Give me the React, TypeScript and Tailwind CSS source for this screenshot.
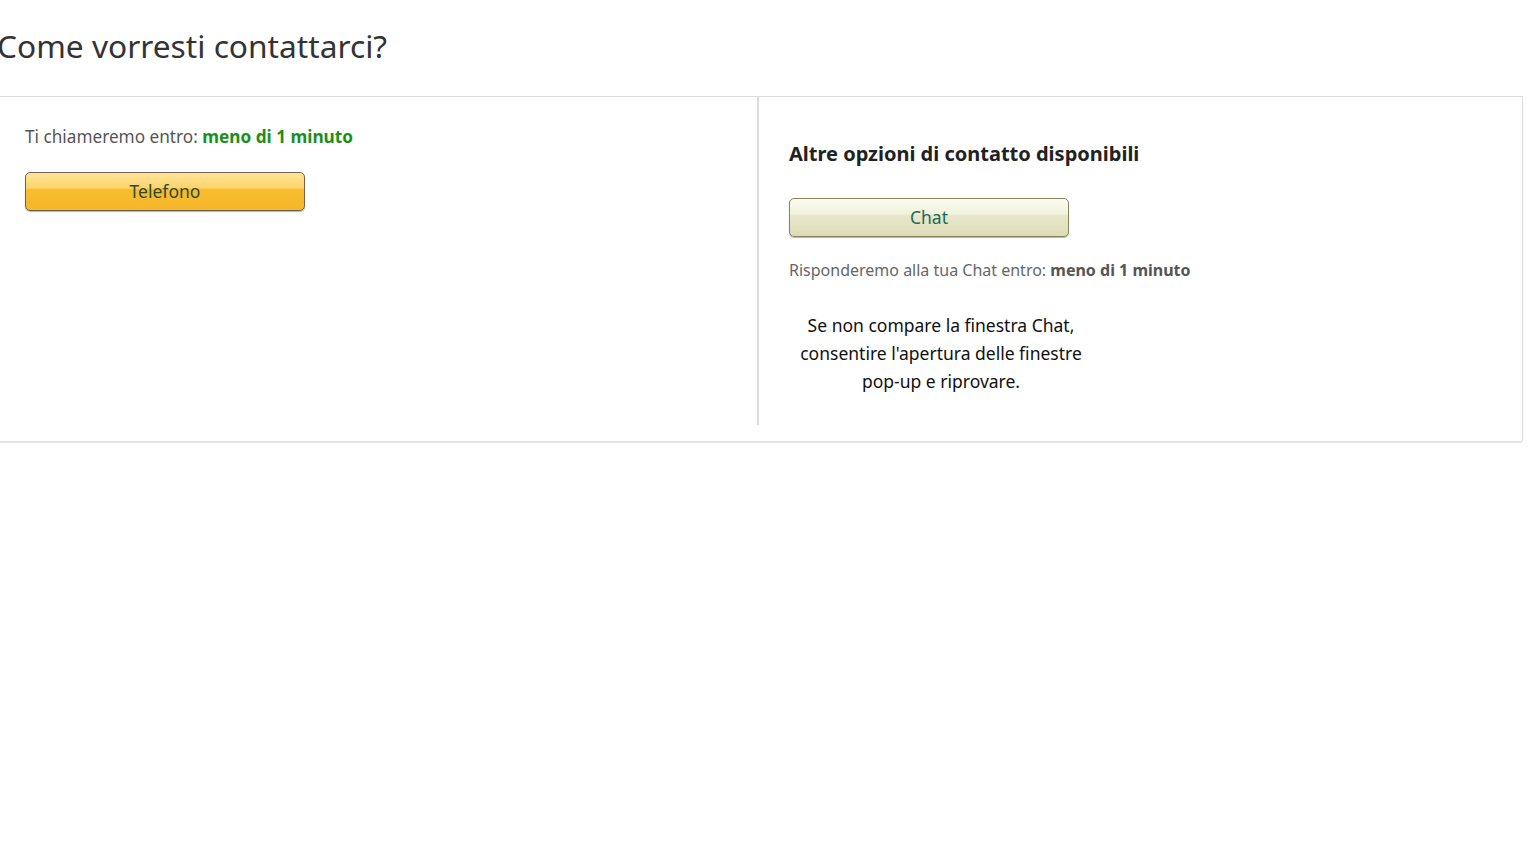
const font = { fontFamily: '"Noto Sans", "Open Sans", sans-serif' };

export default function App() {
  return (
    <div className="min-h-[851px] bg-white text-[#333]" style={font}>
      <h1 className="-ml-[3px] pt-[27px] h-[96px] text-[31.7px] leading-[38px] font-normal text-[#333]">
        Come vorresti contattarci?
      </h1>
      <div className="w-[1523px] border-t border-[#ddd] border-r border-b-2 border-b-[#e3e3e3] rounded-br-[4px] pb-4 flex">
        <div className="w-[759px] h-[328px] border-r-2 border-[#ddd] pl-[25px] pt-[29px]">
          <p className="text-[17.2px] leading-[22px] text-[#555]">
            Ti chiameremo entro: <span className="font-bold text-[#1a8f1a]">meno di 1 minuto</span>
          </p>
          <button className="mt-[24px] w-[280px] h-[39px] rounded-[5px] border border-[#6e6450] bg-[linear-gradient(#ffe39a_0%,#fdd46a_40%,#f8bd2e_45%,#f6b62a_100%)] text-[17.5px] text-[#2c4a36] shadow-[0_1px_1px_rgba(0,0,0,0.3)]">
            Telefono
          </button>
        </div>
        <div className="flex-1 pl-[30px] pt-[45px]">
          <h2 className="text-[20px] leading-[24px] font-bold text-[#222]">
            Altre opzioni di contatto disponibili
          </h2>
          <button className="mt-[32px] w-[280px] h-[39px] rounded-[5px] border border-[#86845f] bg-[linear-gradient(#fafaf0_0%,#f2f2de_40%,#e8e7cb_45%,#dedcb6_100%)] text-[17.5px] text-[#1d6b5c] shadow-[0_1px_1px_rgba(0,0,0,0.3)]">
            Chat
          </button>
          <p className="mt-[23px] text-[16px] leading-[20px] text-[#666]">
            Risponderemo alla tua Chat entro: <span className="font-bold text-[#555]">meno di 1 minuto</span>
          </p>
          <p className="mt-[31px] w-[304px] text-center text-[17.5px] leading-[28px] text-[#111]">
            Se non compare la finestra Chat,
            <br />
            consentire l'apertura delle finestre
            <br />
            pop-up e riprovare.
          </p>
        </div>
      </div>
    </div>
  );
}
